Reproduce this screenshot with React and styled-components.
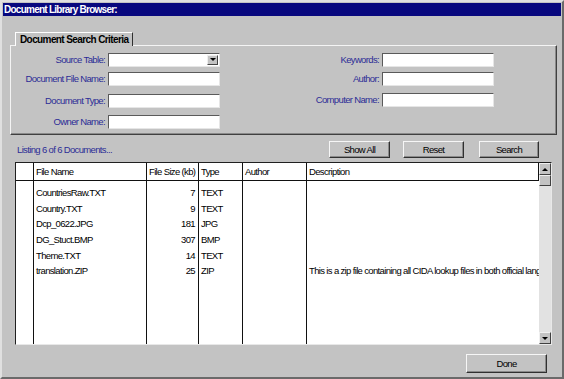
import React from "react";
import styled, { createGlobalStyle } from "styled-components";

const Global = createGlobalStyle`
  html, body { margin: 0; padding: 0; background: #c3c3c3; }
  * { box-sizing: border-box; }
`;

const FONT = `"Liberation Sans", Arial, sans-serif`;

const Window = styled.div`
  width: 564px;
  height: 379px;
  background: #c3c3c3;
  border: 2px solid;
  border-color: #e0e0e0 #6a6a6a #6a6a6a #e0e0e0;
  padding: 1px;
  display: flex;
  flex-direction: column;
  font-family: ${FONT};
  font-size: 9.5px;
  letter-spacing: -0.65px;
  color: #000;
`;

const TitleBar = styled.div`
  height: 13px;
  background: #08087e;
  color: #fff;
  font-weight: bold;
  font-size: 10px;
  letter-spacing: -0.75px;
  line-height: 13px;
  padding-left: 1px;
`;

const Content = styled.div`
  flex: 1;
  display: flex;
  flex-direction: column;
  padding: 16px 4px 0 7px;
`;

const TabStrip = styled.div`
  display: flex;
  padding-left: 5px;
`;

const Tab = styled.div`
  height: 14px;
  padding: 0 4px 0 4px;
  background: #c3c3c3;
  border-top: 1px solid #fff;
  border-left: 1px solid #fff;
  border-right: 1px solid #303030;
  font-weight: bold;
  font-size: 10px;
  letter-spacing: -0.6px;
  line-height: 13px;
  margin-bottom: -1px;
  position: relative;
  z-index: 1;
`;

const Group = styled.div`
  height: 90px;
  border: 1px solid;
  border-color: #f4f4f4 #404040 #404040 #f4f4f4;
  box-shadow: inset -1px -1px 0 #8a8a8a;
  display: grid;
  grid-template-columns: 274px 1fr;
  padding: 7px 0 0 0;
`;

const FieldCol = styled.div`
  display: flex;
  flex-direction: column;
`;

const FieldRow = styled.div`
  display: flex;
  align-items: center;
  height: 13px;
  margin-bottom: ${(p) => p.$gap}px;
`;

const Label = styled.span`
  width: ${(p) => p.$w}px;
  text-align: right;
  color: #2c2c96;
  padding-right: 3px;
  white-space: nowrap;
`;

const Input = styled.div`
  width: 112px;
  height: 14px;
  background: #fff;
  border: 1px solid;
  border-color: #5a5a5a #e6e6e6 #e6e6e6 #5a5a5a;
  display: flex;
  justify-content: flex-end;
  align-items: stretch;
  padding: 1px;
`;

const DropBtn = styled.div`
  width: 11px;
  background: #c3c3c3;
  border: 1px solid;
  border-color: #eee #444 #444 #eee;
  display: flex;
  align-items: center;
  justify-content: center;
`;

const Arrow = styled.div`
  width: 0;
  height: 0;
  border-left: 3px solid transparent;
  border-right: 3px solid transparent;
  border-${(p) => (p.$up ? "bottom" : "top")}: 3px solid #000;
`;

const ActionRow = styled.div`
  display: flex;
  align-items: center;
  height: 17px;
  margin-top: 6px;
`;

const Listing = styled.div`
  flex: 1;
  color: #2c2c96;
  padding-left: 7px;
`;

const Button = styled.div`
  width: ${(p) => p.$w || 61}px;
  height: ${(p) => p.$h || 17}px;
  margin-right: ${(p) => p.$mr || 0}px;
  background: #c3c3c3;
  border: 1px solid;
  border-color: #f6f6f6 #303030 #303030 #f6f6f6;
  box-shadow: inset -1px -1px 0 #8a8a8a;
  display: flex;
  align-items: center;
  justify-content: center;
`;

const TableWrap = styled.div`
  margin-left: 5px;
  width: 537px;
  height: 183px;
  margin-top: 4px;
  border: 1px solid;
  border-color: #202020 #e8e8e8 #e8e8e8 #202020;
  display: flex;
  background: #fff;
`;

const Grid = styled.div`
  flex: 1;
  display: grid;
  grid-template-columns: 18px 113px 52px 44px 64px 1fr;
  grid-template-rows: 18px 1fr;
  min-width: 0;
`;

const HeadCell = styled.div`
  border-right: 1px solid #111;
  border-bottom: 1px solid #111;
  padding-left: 2px;
  line-height: 17px;
  white-space: nowrap;
  overflow: hidden;
`;

const Column = styled.div`
  border-right: ${(p) => (p.$last ? "none" : "1px solid #111")};
  padding-top: 4px;
  display: flex;
  flex-direction: column;
  overflow: hidden;
  min-width: 0;
`;

const Cell = styled.div`
  height: 15.7px;
  line-height: 15px;
  padding: 0 ${(p) => (p.$right ? "3px" : "0")} 0 2px;
  text-align: ${(p) => (p.$right ? "right" : "left")};
  white-space: nowrap;
`;

const Scrollbar = styled.div`
  width: 12px;
  flex-shrink: 0;
  background: #e2e2e2;
  display: flex;
  flex-direction: column;
  justify-content: space-between;
`;

const ScrollTop = styled.div`
  display: flex;
  flex-direction: column;
`;

const ScrollBtn = styled.div`
  width: 12px;
  height: ${(p) => p.$h || 12}px;
  background: #c3c3c3;
  border: 1px solid;
  border-color: #f0f0f0 #404040 #404040 #f0f0f0;
  display: flex;
  align-items: center;
  justify-content: center;
`;

const Footer = styled.div`
  display: flex;
  justify-content: flex-end;
  padding: 9px 10px 0 0;
`;

const rows = [
  ["CountriesRaw.TXT", "7", "TEXT", "", ""],
  ["Country.TXT", "9", "TEXT", "", ""],
  ["Dcp_0622.JPG", "181", "JPG", "", ""],
  ["DG_Stuct.BMP", "307", "BMP", "", ""],
  ["Theme.TXT", "14", "TEXT", "", ""],
  ["translation.ZIP", "25", "ZIP", "", "This is a zip file containing all CIDA lookup files in both official languages"],
];

const leftFields = [
  { label: "Source Table:", drop: true, gap: 6 },
  { label: "Document File Name:", gap: 9 },
  { label: "Document Type:", gap: 8 },
  { label: "Owner Name:", gap: 0 },
];
const rightFields = [
  { label: "Keywords:", gap: 6 },
  { label: "Author:", gap: 8 },
  { label: "Computer Name:", gap: 0 },
];

export default function App() {
  return (
    <>
      <Global />
      <Window>
        <TitleBar>Document Library Browser:</TitleBar>
        <Content>
          <TabStrip>
            <Tab>Document Search Criteria</Tab>
          </TabStrip>
          <Group>
            <FieldCol>
              {leftFields.map((f) => (
                <FieldRow key={f.label} $gap={f.gap}>
                  <Label $w={97}>{f.label}</Label>
                  <Input>
                    {f.drop && (
                      <DropBtn>
                        <Arrow />
                      </DropBtn>
                    )}
                  </Input>
                </FieldRow>
              ))}
            </FieldCol>
            <FieldCol>
              {rightFields.map((f) => (
                <FieldRow key={f.label} $gap={f.gap}>
                  <Label $w={97}>{f.label}</Label>
                  <Input />
                </FieldRow>
              ))}
            </FieldCol>
          </Group>
          <ActionRow>
            <Listing>Listing 6 of 6 Documents...</Listing>
            <Button $mr={13}>Show All</Button>
            <Button $mr={15}>Reset</Button>
            <Button $w={60} $mr={18}>Search</Button>
          </ActionRow>
          <TableWrap>
            <Grid>
              <HeadCell />
              <HeadCell>File Name</HeadCell>
              <HeadCell>File Size (kb)</HeadCell>
              <HeadCell>Type</HeadCell>
              <HeadCell>Author</HeadCell>
              <HeadCell>Description</HeadCell>
              <Column />
              <Column>
                {rows.map((r) => (
                  <Cell key={r[0]}>{r[0]}</Cell>
                ))}
              </Column>
              <Column>
                {rows.map((r) => (
                  <Cell key={r[0]} $right>
                    {r[1]}
                  </Cell>
                ))}
              </Column>
              <Column>
                {rows.map((r) => (
                  <Cell key={r[0]}>{r[2]}</Cell>
                ))}
              </Column>
              <Column>
                {rows.map((r) => (
                  <Cell key={r[0]}>{r[3]}</Cell>
                ))}
              </Column>
              <Column $last>
                {rows.map((r) => (
                  <Cell key={r[0]}>{r[4]}</Cell>
                ))}
              </Column>
            </Grid>
            <Scrollbar>
              <ScrollTop>
                <ScrollBtn>
                  <Arrow $up />
                </ScrollBtn>
                <ScrollBtn $h={11} />
              </ScrollTop>
              <ScrollBtn>
                <Arrow />
              </ScrollBtn>
            </Scrollbar>
          </TableWrap>
          <Footer>
            <Button $w={81} $h={19}>
              Done
            </Button>
          </Footer>
        </Content>
      </Window>
    </>
  );
}
